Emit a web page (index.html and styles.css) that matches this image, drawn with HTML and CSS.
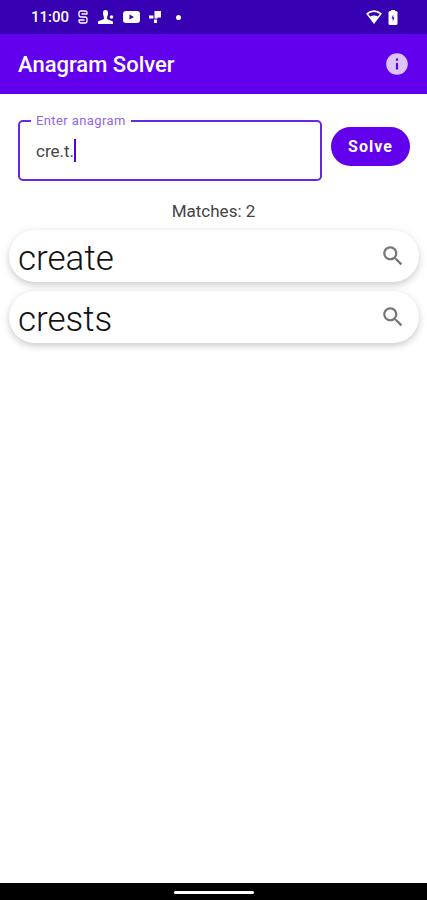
FILE: index.html
```html
<!DOCTYPE html>
<html lang="en">
<head>
  <meta charset="UTF-8" />
  <meta name="viewport" content="width=device-width, initial-scale=1" />
  <title>Anagram Solver</title>
  <link rel="stylesheet" href="styles.css">
</head>
<body>
  <div class="status-bar">
    <span class="clock">11:00</span>
    <div class="notifications">
      <svg width="12" height="14" viewBox="0 0 12 14" fill="none" stroke="currentColor" stroke-width="1.3">
        <path d="M10 4.500V3Q10 1 8 1H4Q2 1 2 3V5Q2 7 4 7H8Q10 7 10 9V11Q10 13 8 13H4Q2 13 2 11V9.500M4.500 4H10M2 10H7.500" />
      </svg>
      <svg width="16" height="14" viewBox="0 0 16 14" fill="currentColor">
        <path d="M7.500 0C9.500 0 10.300 1.600 10 4C9.800 5.600 9 6.500 9 8.500C9.500 10.500 14.500 10 15 12V14H0V12C0.500 10 5.500 10.500 6 8.500C6 6.500 5.200 5.600 5 4C4.700 1.600 5.500 0 7.500 0Z" />
        <circle cx="13.500" cy="7" r="1.800" />
      </svg>
      <svg width="17" height="12" viewBox="0 0 17 12" fill="currentColor">
        <path fill-rule="evenodd" d="M3 0H14Q17 0 17 3V9Q17 12 14 12H3Q0 12 0 9V3Q0 0 3 0ZM6.500 3.500V8.500L11 6Z" />
      </svg>
      <svg width="12" height="12" viewBox="0 0 12 12" fill="currentColor">
        <path d="M5.500 0H12V6.500H8.500V7.500H5.500ZM0 4.500H4.500V7.500H0ZM5 8.500H8V12H5Z" />
      </svg>
      <span class="dot"></span>
    </div>
    <div class="system">
      <svg width="16" height="14" viewBox="0 0 16 14" fill="currentColor">
        <path fill-rule="evenodd" d="M0 3.500Q8 -3 16 3.500L8 14ZM2.200 4L4.200 6.500Q8 4.500 11.800 6.500L13.800 4Q8 0 2.200 4Z" />
      </svg>
      <svg width="10" height="15" viewBox="0 0 10 15" fill="currentColor">
        <path fill-rule="evenodd" d="M3 0H7V1H8Q9.500 1 9.500 2.500V13.500Q9.500 15 8 15H2Q0.500 15 0.500 13.500V2.500Q0.500 1 2 1H3ZM5.300 4.500L3.500 8.500H4.700V11.500L6.500 7.500H5.300Z" />
      </svg>
    </div>
  </div>

  <header class="app-bar">
    <h1>Anagram Solver</h1>
    <button class="icon-button info" type="button" aria-label="About">
      <svg width="26" height="26" viewBox="0 0 24 24" fill="currentColor">
        <path d="M12 2C6.480 2 2 6.480 2 12s4.480 10 10 10 10-4.480 10-10S17.520 2 12 2zm1 15h-2v-6h2v6zm0-8h-2V7h2v2z" />
      </svg>
    </button>
  </header>

  <main>
    <form class="search" id="anagram-form">
      <div class="field">
        <label for="anagram">Enter anagram</label>
        <input type="text" id="anagram" value="cre.t." autocomplete="off" spellcheck="false" />
        <span class="caret"></span>
      </div>
      <button class="solve" type="submit">Solve</button>
    </form>

    <p class="matches">Matches: 2</p>

    <ul class="results">
      <li>
        <span class="word">create</span>
        <button class="icon-button" type="button" aria-label="Look up create">
          <svg width="26" height="26" viewBox="0 0 24 24" fill="currentColor">
            <path d="M15.500 14h-.79l-.28-.27C15.410 12.590 16 11.110 16 9.500 16 5.910 13.090 3 9.500 3S3 5.910 3 9.500 5.910 16 9.500 16c1.610 0 3.090-.59 4.230-1.570l.27.28v.79l5 4.990L20.490 19l-4.990-5zm-6 0C7.010 14 5 11.990 5 9.500S7.010 5 9.500 5 14 7.010 14 9.500 11.990 14 9.500 14z" />
          </svg>
        </button>
      </li>
      <li>
        <span class="word">crests</span>
        <button class="icon-button" type="button" aria-label="Look up crests">
          <svg width="26" height="26" viewBox="0 0 24 24" fill="currentColor">
            <path d="M15.500 14h-.79l-.28-.27C15.410 12.590 16 11.110 16 9.500 16 5.910 13.090 3 9.500 3S3 5.910 3 9.500 5.910 16 9.500 16c1.610 0 3.090-.59 4.230-1.570l.27.28v.79l5 4.990L20.490 19l-4.990-5zm-6 0C7.010 14 5 11.990 5 9.500S7.010 5 9.500 5 14 7.010 14 9.500 11.990 14 9.500 14z" />
          </svg>
        </button>
      </li>
    </ul>
  </main>

  <div class="nav-bar"><span class="handle"></span></div>
</body>
</html>
```

FILE: styles.css
```css
* {
  box-sizing: border-box;
}
body {
  margin: 0;
  min-height: 100vh;
  display: flex;
  flex-direction: column;
  font-family: Roboto, sans-serif;
  background: #fff;
  color: #212121;
}
svg {
  display: block;
}
button {
  font-family: inherit;
  border: none;
  cursor: pointer;
}

/* status bar */
.status-bar {
  display: flex;
  align-items: center;
  height: 34px;
  padding: 0 29px 0 31px;
  background: #3700b3;
  color: #fff;
}
.clock {
  font-size: 15px;
  font-weight: 500;
}
.notifications {
  display: flex;
  align-items: center;
  gap: 9px;
  margin-left: 8px;
}
.dot {
  width: 5px;
  height: 5px;
  margin-left: 6px;
  border-radius: 50%;
  background: #fff;
}
.system {
  display: flex;
  align-items: center;
  gap: 6px;
  margin-left: auto;
}

/* app bar */
.app-bar {
  display: flex;
  align-items: center;
  justify-content: space-between;
  height: 60px;
  padding: 0 17px 0 18px;
  background: #6200ee;
  color: #fff;
}
.app-bar h1 {
  margin: 0;
  font-size: 22px;
  font-weight: 500;
}
.icon-button {
  padding: 0;
  background: none;
  color: #757575;
}
.info {
  color: #dcc4fb;
}

main {
  flex: 1;
}
.search {
  display: flex;
  align-items: center;
  gap: 9px;
  padding: 26px 17px 0 18px;
}
.field {
  position: relative;
  flex: 1;
}
.field label {
  position: absolute;
  top: -7px;
  left: 13px;
  padding: 0 5px;
  background: #fff;
  color: #8f66ea;
  font-size: 13px;
  line-height: 16px;
  letter-spacing: 0.4px;
}
.field input {
  display: block;
  width: 100%;
  height: 61px;
  padding: 0 16px;
  border: 2px solid #6429e0;
  border-radius: 5px;
  outline: none;
  background: #fff;
  color: #444;
  caret-color: transparent;
  font-family: inherit;
  font-size: 17px;
}
.caret {
  position: absolute;
  top: 19px;
  left: 56px;
  width: 2px;
  height: 23px;
  background: #5000dc;
}
.solve {
  width: 79px;
  height: 39px;
  margin-bottom: 8px;
  padding: 0;
  border-radius: 20px;
  background: #6200ee;
  color: #fff;
  font-size: 16px;
  font-weight: 700;
  letter-spacing: 1px;
}

.matches {
  margin: 20px 0 8px;
  text-align: center;
  font-size: 17px;
  line-height: 21px;
  color: #444;
}
.results {
  display: flex;
  flex-direction: column;
  gap: 9px;
  margin: 0;
  padding: 0 8px 0 9px;
  list-style: none;
}
.results li {
  display: flex;
  align-items: center;
  justify-content: space-between;
  height: 52px;
  padding: 0 13px 0 9px;
  border-radius: 26px;
  background: #fff;
  box-shadow: 0 3px 6px rgba(0, 0, 0, 0.14), 0 2px 12px rgba(0, 0, 0, 0.08);
}
.word {
  padding-top: 4px;
  color: #111;
  font-size: 35px;
  font-weight: 300;
}

/* gesture bar */
.nav-bar {
  display: flex;
  align-items: center;
  justify-content: center;
  height: 17px;
  padding-top: 2px;
  background: #000;
}
.handle {
  width: 80px;
  height: 3px;
  border-radius: 2px;
  background: #fff;
}
```
